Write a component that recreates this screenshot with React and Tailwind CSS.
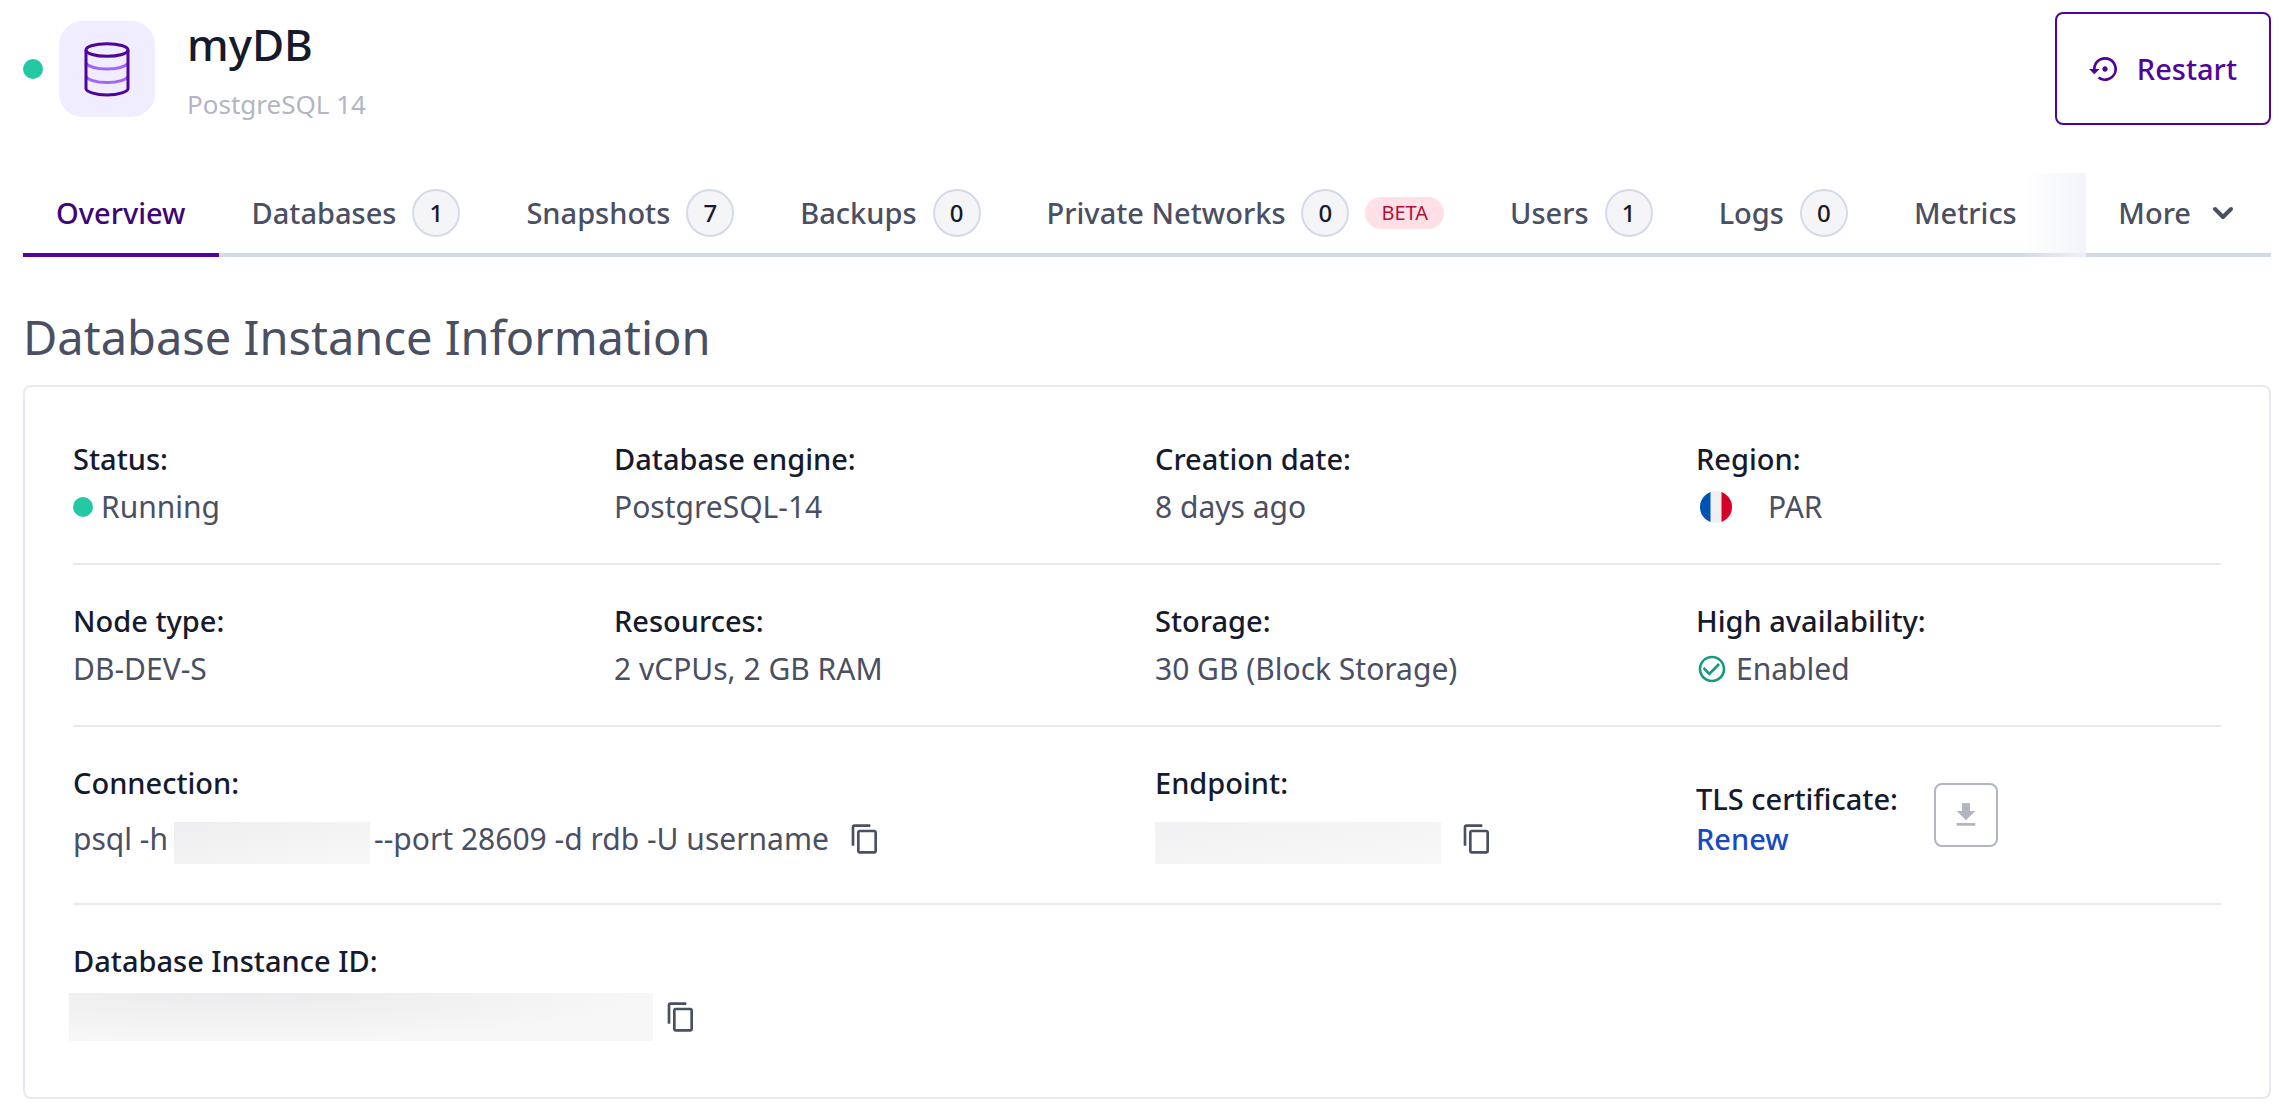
import { MdSettingsBackupRestore, MdContentCopy, MdCheckCircleOutline } from "react-icons/md";

const TABS = [
  { label: "Overview", active: true },
  { label: "Databases", count: 1 },
  { label: "Snapshots", count: 7 },
  { label: "Backups", count: 0 },
  { label: "Private Networks", count: 0, beta: true },
  { label: "Users", count: 1 },
  { label: "Logs", count: 0 },
  { label: "Metrics" },
];

function DatabaseIcon() {
  return (
    <svg viewBox="0 0 48 56" className="h-14 w-12" fill="none" strokeWidth="3" aria-hidden="true">
      <path d="M2.5 22c3 3.500 11 6 21.500 6s18.500-2.500 21.500-6" stroke="#a365f6" />
      <path d="M2.500 35.500c3 3.500 11 6 21.500 6s18.500-2.500 21.500-6" stroke="#a365f6" />
      <ellipse cx="24" cy="9" rx="21" ry="6.300" stroke="#4f0599" />
      <path d="M3 9v38.500c0 3 9 6.500 21 6.500s21-3.500 21-6.500V9" stroke="#4f0599" />
    </svg>
  );
}

function DownloadIcon() {
  return (
    <svg viewBox="0 0 24 24" className="size-8" fill="currentColor" aria-hidden="true">
      <path d="M19 9h-4V3H9v6H5l7 7 7-7zM5 18v2h14v-2H5z" />
    </svg>
  );
}

function Chevron() {
  return (
    <svg viewBox="0 0 32 32" className="size-8" fill="none" stroke="currentColor" strokeWidth="4" strokeLinecap="round" strokeLinejoin="round" aria-hidden="true">
      <path d="M8 12l8 8 8-8" />
    </svg>
  );
}

function FrenchFlag() {
  return (
    <svg viewBox="0 0 32 32" className="size-8" role="img" aria-label="France">
      <clipPath id="flag-disc"><circle cx="16" cy="16" r="16" /></clipPath>
      <g clipPath="url(#flag-disc)">
        <path fill="#f0f0f0" d="M0 0h32v32H0z" />
        <path fill="#0052b4" d="M0 0h10.500v32H0z" />
        <path fill="#d80027" d="M21.500 0H32v32H21.500z" />
      </g>
    </svg>
  );
}

function CopyButton({ label }) {
  return (
    <button type="button" aria-label={label} className="shrink-0 text-[#4a4f62]">
      <MdContentCopy className="size-8" />
    </button>
  );
}

function Field({ label, children, className = "" }) {
  return (
    <div className={className}>
      <dt className="text-[29px] leading-[48px] font-medium text-[#151a2d]">{label}</dt>
      {children}
    </div>
  );
}

function Value({ children, className = "" }) {
  return <dd className={`flex items-center text-[30px] leading-[48px] text-[#4a4f62] ${className}`}>{children}</dd>;
}

function Row({ children, className = "" }) {
  return <dl className={`grid grid-cols-4 gap-x-4 pb-8 ${className}`}>{children}</dl>;
}

export default function App() {
  return (
    <main className="bg-white pt-3 pr-[19px] pb-4 pl-[23px] font-['Noto_Sans',sans-serif] text-[#4a4f62]">
      <header className="flex items-stretch">
        <span className="size-5 shrink-0 self-center rounded-full bg-[#23c9a3]" role="img" aria-label="Running" />
        <div className="ml-4 grid size-24 shrink-0 place-items-center self-center rounded-3xl bg-[#efedff]">
          <DatabaseIcon />
        </div>
        <div className="ml-8">
          <h1 className="text-[44px] leading-[64px] font-medium text-[#151a2d]">myDB</h1>
          <p className="mt-2 text-[26px] leading-[41px] text-[#b2b6c3]">PostgreSQL 14</p>
        </div>
        <button type="button" className="ml-auto flex items-center gap-4 rounded-lg border-2 border-[#4f0599] px-8 text-[29px] font-medium text-[#4f0599]">
          <MdSettingsBackupRestore className="size-8" />
          Restart
        </button>
      </header>

      <nav className="mt-12 flex" aria-label="Database sections">
        <div className="relative flex min-w-0 flex-1 overflow-hidden">
          {TABS.map((tab) => (
            <a
              key={tab.label}
              href="#"
              aria-current={tab.active ? "page" : undefined}
              className={`flex h-[84px] shrink-0 items-center gap-4 border-b-4 px-[33px] text-[29px] font-medium whitespace-nowrap ${
                tab.active ? "border-[#4f0599] text-[#3d0678]" : "border-[#d4dae7]"
              }`}
            >
              {tab.label}
              {tab.count !== undefined && (
                <span className="grid size-12 place-items-center rounded-full border-2 border-[#d4dae7] bg-[#f5f5f8] text-2xl text-[#151a2d]">
                  {tab.count}
                </span>
              )}
              {tab.beta && (
                <span className="rounded-full bg-[#ffe0e6] px-4 text-xl leading-8 font-normal text-[#b3103b]">BETA</span>
              )}
            </a>
          ))}
          <div className="flex-1 border-b-4 border-[#d4dae7]" />
          <div className="pointer-events-none absolute inset-y-0 right-0 w-16 bg-linear-to-r from-transparent to-[#f1f3f8]/90" />
        </div>
        <button type="button" className="flex items-center gap-4 border-b-4 border-[#d4dae7] px-8 text-[29px] font-medium">
          More
          <Chevron />
        </button>
      </nav>

      <h2 className="mt-12 mb-4 text-[47px] leading-[64px]">Database Instance Information</h2>

      <section className="divide-y-2 divide-[#e6eaf0] rounded-lg border-2 border-[#e6e9f1] p-12">
        <Row>
          <Field label="Status:">
            <Value className="gap-2">
              <span className="size-5 rounded-full bg-[#23c9a3]" />
              Running
            </Value>
          </Field>
          <Field label="Database engine:"><Value>PostgreSQL-14</Value></Field>
          <Field label="Creation date:"><Value>8 days ago</Value></Field>
          <Field label="Region:">
            <Value className="gap-9 pl-1"><FrenchFlag />PAR</Value>
          </Field>
        </Row>
        <Row className="pt-8">
          <Field label="Node type:"><Value>DB-DEV-S</Value></Field>
          <Field label="Resources:"><Value>2 vCPUs, 2 GB RAM</Value></Field>
          <Field label="Storage:"><Value>30 GB (Block Storage)</Value></Field>
          <Field label="High availability:">
            <Value className="gap-2">
              <MdCheckCircleOutline className="size-8 text-[#179b7c]" />
              Enabled
            </Value>
          </Field>
        </Row>
        <Row className="pt-8">
          <Field label="Connection:" className="col-span-2">
            <Value className="h-16">
              psql -h
              <span className="mt-2 mr-1 ml-1.5 h-[42px] w-[196px] bg-linear-to-br from-[#eeeef0] to-[#f8f8f8]" />
              --port 28609 -d rdb -U username
              <span className="ml-5 flex"><CopyButton label="Copy connection command" /></span>
            </Value>
          </Field>
          <Field label="Endpoint:">
            <Value className="h-16 gap-5">
              <span className="mt-2 h-[42px] w-[286px] bg-linear-to-br from-[#f1f1f3] to-[#f8f8f8]" />
              <CopyButton label="Copy endpoint" />
            </Value>
          </Field>
          <div className="flex items-center gap-9">
            <div>
              <dt className="text-[29px] leading-[48px] font-medium text-[#151a2d]">TLS certificate:</dt>
              <dd className="text-[29px] leading-8 font-medium">
                <a href="#" className="text-[#174ac2]">Renew</a>
              </dd>
            </div>
            <dd>
              <button type="button" aria-label="Download certificate" className="grid size-16 place-items-center rounded-lg border-2 border-[#b2b6c3] text-[#b2b6c3]">
                <DownloadIcon />
              </button>
            </dd>
          </div>
        </Row>
        <dl className="pt-8">
          <Field label="Database Instance ID:">
            <Value className="-ml-1 h-16 gap-3">
              <span className="h-12 w-[584px] bg-[#f6f6f6] bg-radial-[at_30%_0%] from-[#ebebed] to-[#f7f7f7] to-70%" />
              <CopyButton label="Copy instance ID" />
            </Value>
          </Field>
        </dl>
      </section>
    </main>
  );
}
